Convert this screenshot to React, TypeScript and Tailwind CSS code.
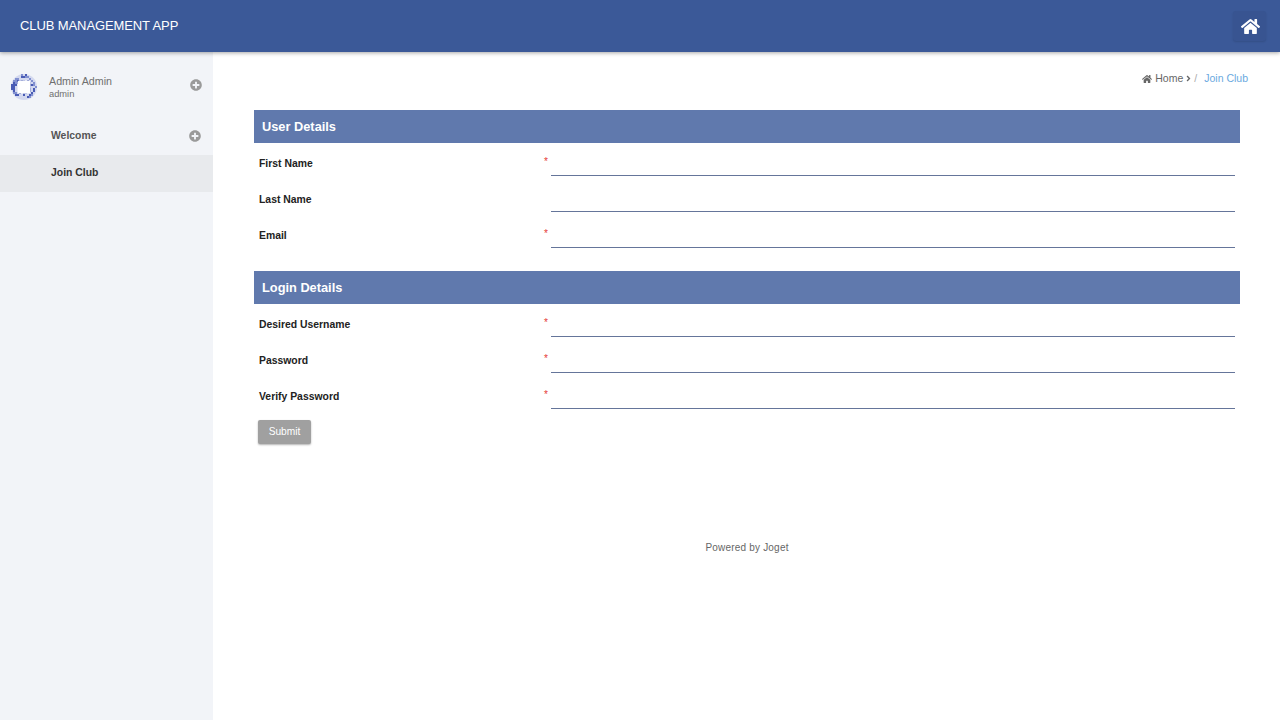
import React from "react";
import { FaHome, FaPlusCircle, FaAngleRight } from "react-icons/fa";

const Avatar = () => {
  const dots: number[][] = [];
  for (let x = 0; x < 13; x++) {
    for (let y = 0; y < 13; y++) {
      const cx = x * 2 + 1;
      const cy = y * 2 + 1;
      const d = Math.hypot(cx - 13, cy - 13);
      const n = Math.abs(Math.sin(x * 12.9898 + y * 78.233) * 43758.5453) % 1;
      if (d < 12.5 && n < 0.5) dots.push([cx, cy, n]);
    }
  }
  return (
    <svg width="26" height="26" viewBox="0 0 26 26" className="shrink-0">
      <circle cx="13" cy="13" r="13" fill="#d3d8ef" />
      {dots.map((d, i) => (
        <rect
          key={i}
          x={d[0] - 1}
          y={d[1] - 1}
          width="2"
          height="2"
          fill={d[2] < 0.25 ? "#4a5cb5" : "#8290d0"}
        />
      ))}
      <rect x="6.5" y="6.5" width="13" height="13" rx="2" fill="#ffffff" />
    </svg>
  );
};

const Field = ({ label, required }: { label: string; required?: boolean }) => (
  <div className="flex h-[36px] px-[5px]">
    <label className="w-[285px] pt-[12px] text-[10.4px] leading-[16px] font-bold text-[#222222]">
      {label}
    </label>
    <span className="w-[7px] pt-[11px] text-[10px] leading-[14px] text-[#e53935]">
      {required ? "*" : ""}
    </span>
    <div className="h-[32px] flex-1 border-b border-[#65759a]" />
  </div>
);

const Section = ({ title }: { title: string }) => (
  <div className="mb-[1px] h-[33px] bg-[#6079ad] pl-[8px] text-[12.8px] leading-[33px] font-bold text-white">
    {title}
  </div>
);

export default function App() {
  return (
    <div
      className="flex h-[720px] w-[1280px] flex-col overflow-hidden bg-white"
      style={{ fontFamily: '"Liberation Sans", Arial, sans-serif' }}
    >
      <header className="relative z-10 flex h-[52px] shrink-0 items-center justify-between bg-[#3b5998] pl-[20px] pr-[14px] shadow-[0_1px_4px_rgba(0,0,0,0.35)]">
        <div className="text-[13px] tracking-[-0.1px] text-white">CLUB MANAGEMENT APP</div>
        <button className="flex h-[30px] w-[33px] items-center justify-center rounded-[3px] bg-[#385491] pl-[1px] shadow-[0_1px_2px_rgba(0,0,0,0.12)]">
          <FaHome className="text-[19px] text-white" />
        </button>
      </header>

      <div className="flex flex-1">
        <aside className="w-[213px] shrink-0 bg-[#f2f4f8]">
          <div className="flex h-[65px] items-center pl-[11px] pr-[11px] pt-[5px]">
            <Avatar />
            <div className="ml-[12px] flex-1">
              <div className="text-[10.7px] leading-[14px] text-[#6f6f6f]">Admin Admin</div>
              <div className="text-[9.3px] leading-[13px] text-[#6f6f6f]">admin</div>
            </div>
            <FaPlusCircle className="mb-[4px] text-[12px] text-[#9a9a9a]" />
          </div>
          <div className="flex h-[38px] items-center pb-[1px] pl-[51px] pr-[12px]">
            <span className="flex-1 text-[10.4px] font-bold text-[#555555]">Welcome</span>
            <FaPlusCircle className="text-[12px] text-[#9a9a9a]" />
          </div>
          <div className="flex h-[37px] items-center bg-[#e8eaed] pb-[1px] pl-[51px]">
            <span className="text-[10.4px] font-bold text-[#333333]">Join Club</span>
          </div>
        </aside>

        <main className="flex-1 pl-[41px] pr-[40px]">
          <div className="-mr-[8px] flex h-[58px] items-center justify-end pb-[5px] text-[10.5px] text-[#666666]">
            <FaHome className="mr-[3px] text-[10px]" />
            <span>Home</span>
            <FaAngleRight className="ml-[1px] text-[9px]" />
            <span className="ml-[1px] text-[#aaaaaa]">/</span>
            <span className="ml-[7px] text-[#6aa9e0]">Join Club</span>
          </div>
          <Section title="User Details" />
          <div className="pb-[19px]">
            <Field label="First Name" required />
            <Field label="Last Name" />
            <Field label="Email" required />
          </div>
          <Section title="Login Details" />
          <Field label="Desired Username" required />
          <Field label="Password" required />
          <Field label="Verify Password" required />
          <div className="pl-[4px] pt-[5px]">
            <button className="h-[24px] w-[53px] rounded-[2px] bg-[#a0a0a0] text-[10.2px] text-white shadow-[0_1px_2px_rgba(0,0,0,0.3)]">
              Submit
            </button>
          </div>
          <div className="pt-[97px] text-center text-[10px] leading-[14px] tracking-[0.2px] text-[#666666]">
            Powered by Joget
          </div>
        </main>
      </div>
    </div>
  );
}
